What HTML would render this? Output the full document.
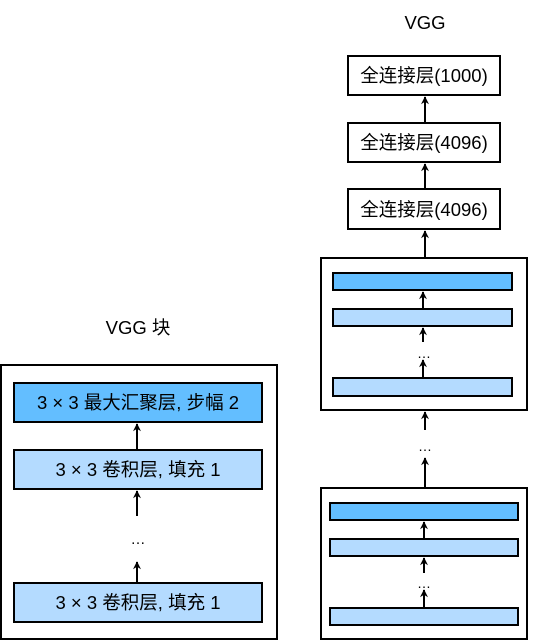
<!DOCTYPE html>
<html><head><meta charset="utf-8"><style>
html,body{margin:0;padding:0;background:#fff;}
svg{display:block}
text{font-family:"Liberation Sans","Noto Sans CJK SC",sans-serif;fill:#000;}
</style></head><body>
<svg width="547" height="640" viewBox="0 0 547 640" xmlns="http://www.w3.org/2000/svg">
<defs>
<marker id="ah" viewBox="0 0 10 10" refX="9" refY="5" markerWidth="4.5" markerHeight="4" orient="auto" markerUnits="strokeWidth">
<path d="M0,0 L10,5 L0,10 L3,5 Z" fill="#000"/>
</marker>
</defs>
<g stroke="#000" stroke-width="2" fill="none">
<rect x="1" y="365" width="276" height="274" fill="#fff"/>
<rect x="14" y="383" width="248" height="39" fill="#63BEFF"/>
<rect x="14" y="450" width="248" height="39" fill="#B4DBFF"/>
<rect x="14" y="583" width="248" height="39" fill="#B4DBFF"/>
<line x1="137" y1="450" x2="137" y2="424" marker-end="url(#ah)"/>
<line x1="137" y1="516" x2="137" y2="491" marker-end="url(#ah)"/>
<line x1="137" y1="583" x2="137" y2="562" marker-end="url(#ah)"/>
<rect x="348" y="56" width="152" height="39" fill="#fff"/>
<rect x="348" y="123" width="152" height="39" fill="#fff"/>
<rect x="348" y="189" width="152" height="40" fill="#fff"/>
<line x1="425" y1="123" x2="425" y2="97" marker-end="url(#ah)"/>
<line x1="425" y1="189" x2="425" y2="164" marker-end="url(#ah)"/>
<line x1="425" y1="258" x2="425" y2="231" marker-end="url(#ah)"/>
<rect x="321" y="258" width="206" height="152" fill="#fff"/>
<rect x="333" y="273" width="179" height="17" fill="#63BEFF"/>
<rect x="333" y="309" width="179" height="17" fill="#B4DBFF"/>
<rect x="333" y="378" width="179" height="18" fill="#B4DBFF"/>
<line x1="423" y1="309" x2="423" y2="292" marker-end="url(#ah)"/>
<line x1="423" y1="342" x2="423" y2="328" marker-end="url(#ah)"/>
<line x1="423" y1="378" x2="423" y2="360" marker-end="url(#ah)"/>
<line x1="425" y1="430" x2="425" y2="412" marker-end="url(#ah)"/>
<line x1="425" y1="488" x2="425" y2="458" marker-end="url(#ah)"/>
<rect x="321" y="488" width="206" height="151" fill="#fff"/>
<rect x="330" y="503" width="188" height="17" fill="#63BEFF"/>
<rect x="330" y="539" width="188" height="17" fill="#B4DBFF"/>
<rect x="330" y="608" width="188" height="17" fill="#B4DBFF"/>
<line x1="424" y1="539" x2="424" y2="522" marker-end="url(#ah)"/>
<line x1="424" y1="573" x2="424" y2="558" marker-end="url(#ah)"/>
<line x1="424" y1="608" x2="424" y2="590" marker-end="url(#ah)"/>
</g>
<g font-size="18.5" text-anchor="middle">
<text x="138" y="334">VGG 块</text>
<text x="138" y="409">3 × 3 最大汇聚层, 步幅 2</text>
<text x="138" y="476">3 × 3 卷积层, 填充 1</text>
<text x="138" y="609">3 × 3 卷积层, 填充 1</text>
<text x="138" y="544" font-size="15">…</text>
<text x="425" y="29">VGG</text>
<text x="424" y="82">全连接层(1000)</text>
<text x="424" y="149">全连接层(4096)</text>
<text x="424" y="216">全连接层(4096)</text>
<text x="424" y="358" font-size="14">…</text>
<text x="425" y="451" font-size="14">…</text>
<text x="424" y="588" font-size="14">…</text>
</g>
</svg>
</body></html>
